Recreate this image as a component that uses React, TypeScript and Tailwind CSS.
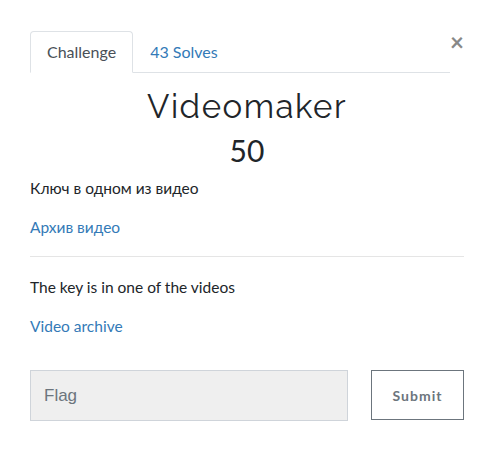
export default function App() {
  return (
    <div className="w-[496px] h-[469px] bg-white font-['Lato','Noto_Sans',sans-serif] text-[#212529]">
      <div className="pt-[31px] pl-[30px] pr-[32px]">
        {/* Tabs */}
        <div className="flex items-start">
          <div className="flex w-[420px] border-b border-[#dee2e6]">
            <div className="-mb-px h-[42px] px-[16px] flex items-center rounded-t-[4px] border border-[#dee2e6] border-b-white bg-white text-[16px] text-[#495057]">
              Challenge
            </div>
            <div className="h-[41px] px-[17px] flex items-center text-[16px] text-[#337ab7]">
              43 Solves
            </div>
          </div>
          <button className="ml-auto -mt-[1px] text-[24px] leading-none font-bold text-[#888]">×</button>
        </div>

        {/* Title */}
        <div className="text-center">
          <h2 className="mt-[14px] text-[33px] leading-[40px] font-['Raleway','Lato',sans-serif] font-normal tracking-[1.5px] text-[#212529]">
            Videomaker
          </h2>
          <h3 className="mt-[5px] text-[30px] leading-[36px] text-[#212529]">50</h3>
        </div>

        {/* Description */}
        <div className="mt-[9px] text-[15.5px] leading-[22px]">
          <p>Ключ в одном из видео</p>
          <p className="mt-[17px] text-[#337ab7]">Архив видео</p>
          <hr className="mt-[18px] border-[#e5e5e5]" />
          <p className="mt-[19px]">The key is in one of the videos</p>
          <p className="mt-[17px] text-[#337ab7]">Video archive</p>
        </div>

        {/* Flag form */}
        <div className="mt-[33px] flex items-start">
          <div className="w-[318px] h-[51px] bg-[#efefef] border border-[#cfd4da] flex items-center pl-[13px] text-[17px] text-[#6c757d] font-['Liberation_Sans',sans-serif]">
            Flag
          </div>
          <button className="ml-[23px] w-[93px] h-[50px] border-[1.5px] border-[#6c757d] text-[14px] font-bold tracking-[1px] text-[#6c757d]">
            Submit
          </button>
        </div>
      </div>
    </div>
  )
}
